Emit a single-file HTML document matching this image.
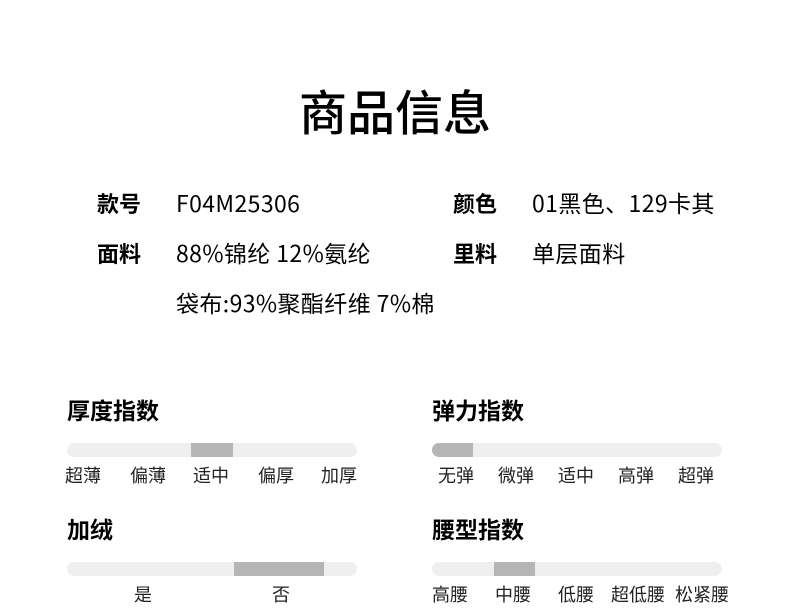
<!DOCTYPE html>
<html><head><meta charset="utf-8"><style>
body{margin:0;width:790px;height:612px;background:#fff;font-family:"Noto Sans CJK SC","Liberation Sans",sans-serif;color:#000;position:relative;overflow:hidden}
.a{position:absolute;white-space:nowrap;line-height:1}
.t{font-size:48px;font-weight:500;left:0;width:790px;text-align:center;top:85px}
.l{font-size:22px;font-weight:bold}
.v{font-size:23px;letter-spacing:0.4px}
.h{font-size:23px;font-weight:bold}
.bar{position:absolute;height:14px;width:290px;background:#efefef;border-radius:7px;overflow:hidden}
.bar i{position:absolute;top:0;height:14px;background:#b5b5b5}
.s{font-size:18px;color:#222}
</style></head><body>
<div class="a t">商品信息</div>
<div class="a l" style="left:97px;top:192px">款号</div>
<div class="a v" style="left:176px;top:191px">F04M25306</div>
<div class="a l" style="left:453px;top:192px">颜色</div>
<div class="a v" style="left:532px;top:191px">01黑色、129卡其</div>
<div class="a l" style="left:97px;top:242px">面料</div>
<div class="a v" style="left:176px;top:241px">88%锦纶 12%氨纶</div>
<div class="a l" style="left:453px;top:242px">里料</div>
<div class="a v" style="left:532px;top:241px">单层面料</div>
<div class="a v" style="left:176px;top:291px">袋布:93%聚酯纤维 7%棉</div>

<div class="a h" style="left:67px;top:398px">厚度指数</div>
<div class="bar" style="left:67px;top:443px"><i style="left:124px;width:42px"></i></div>
<div class="a s" style="left:65px;top:466px">超薄</div>
<div class="a s" style="left:130px;top:466px">偏薄</div>
<div class="a s" style="left:193px;top:466px">适中</div>
<div class="a s" style="left:258px;top:466px">偏厚</div>
<div class="a s" style="left:321px;top:466px">加厚</div>

<div class="a h" style="left:432px;top:398px">弹力指数</div>
<div class="bar" style="left:432px;top:443px"><i style="left:0;width:41px"></i></div>
<div class="a s" style="left:438px;top:466px">无弹</div>
<div class="a s" style="left:498px;top:466px">微弹</div>
<div class="a s" style="left:558px;top:466px">适中</div>
<div class="a s" style="left:618px;top:466px">高弹</div>
<div class="a s" style="left:678px;top:466px">超弹</div>

<div class="a h" style="left:67px;top:517px">加绒</div>
<div class="bar" style="left:67px;top:562px"><i style="left:167px;width:90px"></i></div>
<div class="a s" style="left:134px;top:585px">是</div>
<div class="a s" style="left:272px;top:585px">否</div>

<div class="a h" style="left:432px;top:517px">腰型指数</div>
<div class="bar" style="left:432px;top:562px"><i style="left:62px;width:41px"></i></div>
<div class="a s" style="left:432px;top:585px">高腰</div>
<div class="a s" style="left:495px;top:585px">中腰</div>
<div class="a s" style="left:558px;top:585px">低腰</div>
<div class="a s" style="left:611px;top:585px">超低腰</div>
<div class="a s" style="left:675px;top:585px">松紧腰</div>
</body></html>
